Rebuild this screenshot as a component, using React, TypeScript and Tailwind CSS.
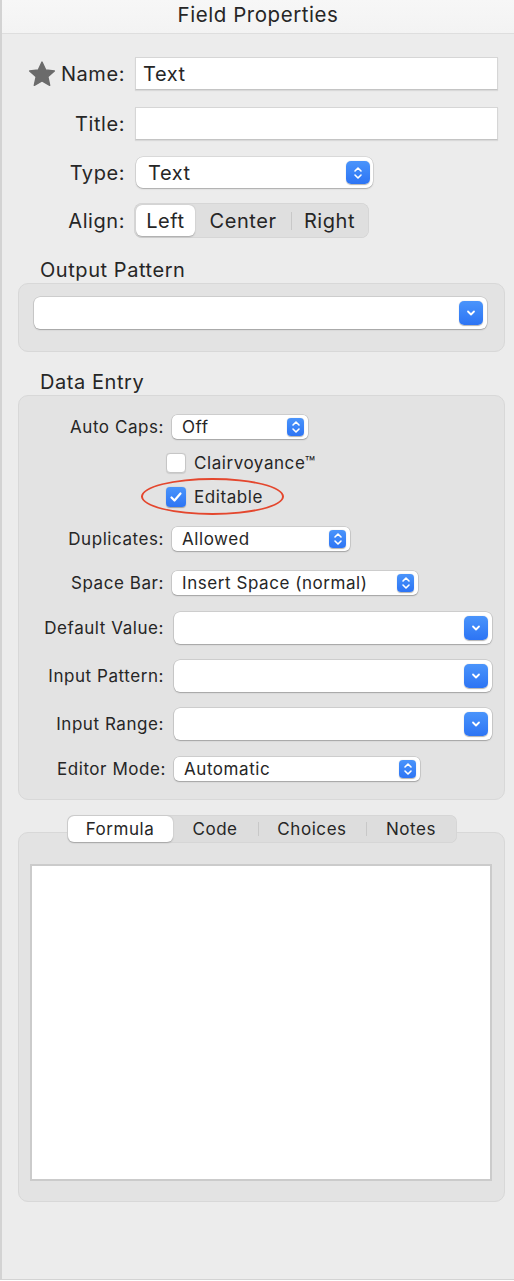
import React from "react";

const FONT = "font-['Inter','Noto_Sans',sans-serif] tracking-[0.035em]";

function UpDown({ w, h, r }: { w: number; h: number; r: string }) {
  return (
    <span
      className={`flex items-center justify-center bg-gradient-to-b from-[#4a94fb] to-[#2d74f4] shadow-[0_0.5px_1px_rgba(0,0,0,0.3)] ${r}`}
      style={{ width: w, height: h }}
    >
      <svg width="10" height="14" viewBox="0 0 10 14" fill="none">
        <path d="M2 5 L5 2 L8 5" stroke="white" strokeWidth="1.6" strokeLinecap="round" strokeLinejoin="round" />
        <path d="M2 9 L5 12 L8 9" stroke="white" strokeWidth="1.6" strokeLinecap="round" strokeLinejoin="round" />
      </svg>
    </span>
  );
}

function Down() {
  return (
    <span className="flex h-[24px] w-[24px] items-center justify-center rounded-[5px] bg-gradient-to-b from-[#4a94fb] to-[#2d74f4] shadow-[0_0.5px_1px_rgba(0,0,0,0.3)]">
      <svg width="12" height="8" viewBox="0 0 12 8" fill="none">
        <path d="M3 2.5 L6 5.5 L9 2.5" stroke="white" strokeWidth="1.8" strokeLinecap="round" strokeLinejoin="round" />
      </svg>
    </span>
  );
}

function SmallSelect({ value, w, ml = 0 }: { value: string; w: number; ml?: number }) {
  return (
    <div
      className="flex h-[24px] items-center justify-between rounded-[5px] bg-white pl-[10px] pr-[4px] text-[17px] shadow-[0_0_0_0.5px_rgba(0,0,0,0.18),0_1px_1.5px_rgba(0,0,0,0.22)]"
      style={{ width: w, marginLeft: ml }}
    >
      <span className="pt-[2px]">{value}</span>
      <UpDown w={17} h={18} r="rounded-[4px]" />
    </div>
  );
}

function Combo({ w }: { w: number }) {
  return (
    <div
      className="flex h-[32px] items-center justify-end rounded-[6px] bg-white pr-[4px] shadow-[0_0_0_0.5px_rgba(0,0,0,0.18),0_1px_1.5px_rgba(0,0,0,0.22)]"
      style={{ width: w }}
    >
      <Down />
    </div>
  );
}

function Check({ on }: { on?: boolean }) {
  return on ? (
    <span className="flex h-[20px] w-[20px] items-center justify-center rounded-[4px] bg-gradient-to-b from-[#4a94fb] to-[#2d74f4] shadow-[0_0.5px_1px_rgba(0,0,0,0.3)]">
      <svg width="14" height="12" viewBox="0 0 14 12" fill="none">
        <path d="M2.5 6.5 L5.5 9.5 L11.5 2.5" stroke="white" strokeWidth="2.2" strokeLinecap="round" strokeLinejoin="round" />
      </svg>
    </span>
  ) : (
    <span className="h-[20px] w-[20px] rounded-[4px] border border-[#c6c6c6] bg-white shadow-[0_0.5px_1px_rgba(0,0,0,0.1)]" />
  );
}

function Heading({ children }: { children: React.ReactNode }) {
  return <div className="ml-[38px] h-[24px] pt-[1px] text-[20px] leading-[24px]">{children}</div>;
}

export default function App() {
  return (
    <div className={`${FONT} h-[1281px] w-[514px] overflow-hidden bg-white text-[#262626]`}>
      <div className="flex h-[1280px] flex-col border-b border-l-2 border-[#d3d3d3] bg-[#ececec]">
        {/* title bar */}
        <div className="flex h-[34px] shrink-0 items-center justify-center border-b border-[#dedede] bg-gradient-to-b from-[#f7f7f7] to-[#f3f3f3] pb-[3px] text-[20.5px]">
          Field Properties
        </div>

        {/* top form */}
        <div className="mt-[23px] flex flex-col text-[20px]">
          <div className="flex h-[33px] items-center">
            <div className="flex w-[123px] items-center justify-end gap-[5px] pt-[1px]">
              <svg width="28" height="27" viewBox="0 0 24 23">
                <path
                  d="M12 0.8 L15.2 7.6 L22.6 8.4 L17 13.4 L18.6 20.8 L12 17 L5.4 20.8 L7 13.4 L1.4 8.4 L8.8 7.6 Z"
                  fill="#6b6b6b"
                  strokeLinejoin="round"
                  stroke="#6b6b6b"
                  strokeWidth="1.2"
                />
              </svg>
              <span>Name:</span>
            </div>
            <div className="ml-[10px] flex h-[33px] w-[363px] items-center border border-[#d6d6d6] border-b-[#c4c4c4] bg-white pl-[7px] pt-[1px] shadow-[0_1px_1px_rgba(0,0,0,0.08)]">
              Text
            </div>
          </div>

          <div className="mt-[17px] flex h-[33px] items-center">
            <div className="w-[123px] pt-[1px] text-right">Title:</div>
            <div className="ml-[10px] h-[33px] w-[363px] border border-[#d6d6d6] border-b-[#c4c4c4] bg-white shadow-[0_1px_1px_rgba(0,0,0,0.08)]" />
          </div>

          <div className="mt-[17px] flex h-[31px] items-center">
            <div className="w-[123px] pt-[1px] text-right">Type:</div>
            <div className="ml-[11px] flex h-[31px] w-[237px] items-center justify-between rounded-[7px] bg-white pl-[12px] pr-[3px] shadow-[0_0_0_0.5px_rgba(0,0,0,0.15),0_1px_1.5px_rgba(0,0,0,0.22)]">
              <span className="pt-[1px]">Text</span>
              <UpDown w={24} h={23} r="rounded-[5px]" />
            </div>
          </div>

          <div className="mt-[15px] flex h-[35px] items-center">
            <div className="w-[123px] pt-[1px] text-right">Align:</div>
            <div className="ml-[9px] flex h-[35px] items-center rounded-[8px] bg-[#dfdfdf] p-[2px] shadow-[inset_0_0_0_0.5px_rgba(0,0,0,0.08)]">
              <div className="flex h-[31px] w-[59px] items-center justify-center rounded-[6px] bg-white pt-[1px] shadow-[0_0.5px_1.5px_rgba(0,0,0,0.25)]">
                Left
              </div>
              <div className="flex h-[31px] w-[96px] items-center justify-center pt-[1px]">Center</div>
              <div className="h-[18px] w-px bg-[#c8c8c8]" />
              <div className="flex h-[31px] w-[75px] items-center justify-center pt-[1px]">Right</div>
            </div>
          </div>
        </div>

        {/* output pattern */}
        <div className="mt-[19px]">
          <Heading>Output Pattern</Heading>
          <div className="mr-[9px] ml-[16px] mt-[2px] flex h-[69px] flex-col rounded-[10px] border border-[#d8d8d8] bg-[#e3e3e3] pl-[15px] pt-[13px]">
            <Combo w={453} />
          </div>
        </div>

        {/* data entry */}
        <div className="mt-[17px]">
          <Heading>Data Entry</Heading>
          <div className="mr-[9px] ml-[16px] mt-[2px] flex h-[405px] flex-col rounded-[10px] border border-[#d8d8d8] bg-[#e3e3e3] text-[17px]">
            <div className="mt-[19px] flex h-[24px] items-center">
              <div className="w-[145px] pt-[2px] text-right">Auto Caps:</div>
              <SmallSelect value="Off" w={136} ml={8} />
            </div>
            <div className="mt-[14px] flex h-[20px] items-center pl-[147px]">
              <Check />
              <span className="ml-[8px] pt-[2px]">Clairvoyance™</span>
            </div>
            <div className="relative mt-[14px] flex h-[20px] items-center pl-[147px]">
              <Check on />
              <span className="ml-[8px] pt-[2px]">Editable</span>
              <div className="absolute left-[122px] top-[-9px] h-[37px] w-[143px] rounded-[50%] border-2 border-[#e4472e]" />
            </div>
            <div className="mt-[20px] flex h-[24px] items-center">
              <div className="w-[145px] pt-[2px] text-right">Duplicates:</div>
              <SmallSelect value="Allowed" w={178} ml={8} />
            </div>
            <div className="mt-[20px] flex h-[24px] items-center">
              <div className="w-[145px] pt-[2px] text-right">Space Bar:</div>
              <SmallSelect value="Insert Space (normal)" w={246} ml={8} />
            </div>
            <div className="mt-[17px] flex h-[32px] items-center">
              <div className="w-[145px] pt-[2px] text-right">Default Value:</div>
              <div className="ml-[10px]">
                <Combo w={318} />
              </div>
            </div>
            <div className="mt-[16px] flex h-[32px] items-center">
              <div className="w-[145px] pt-[2px] text-right">Input Pattern:</div>
              <div className="ml-[10px]">
                <Combo w={318} />
              </div>
            </div>
            <div className="mt-[16px] flex h-[32px] items-center">
              <div className="w-[145px] pt-[2px] text-right">Input Range:</div>
              <div className="ml-[10px]">
                <Combo w={318} />
              </div>
            </div>
            <div className="mt-[17px] flex h-[24px] items-center">
              <div className="w-[147px] pt-[2px] text-right">Editor Mode:</div>
              <SmallSelect value="Automatic" w={246} ml={8} />
            </div>
          </div>
        </div>

        {/* tabs */}
        <div className="mr-[9px] ml-[16px] mt-[32px] flex h-[370px] flex-col items-center rounded-[10px] border border-[#d8d8d8] bg-[#e3e3e3] text-[17px]">
          <div className="-mt-[18px] flex h-[28px] w-[390px] items-center rounded-[7px] bg-[#dddddd] p-[1px] shadow-[inset_0_0_0_0.5px_rgba(0,0,0,0.06)]">
            <div className="flex h-[26px] w-[105px] items-center justify-center rounded-[6px] bg-white pt-[2px] shadow-[0_0.5px_1.5px_rgba(0,0,0,0.25)]">
              Formula
            </div>
            <div className="flex h-[26px] w-[85px] items-center justify-center pt-[2px]">Code</div>
            <div className="h-[14px] w-px bg-[#c8c8c8]" />
            <div className="flex h-[26px] w-[107px] items-center justify-center pt-[2px]">Choices</div>
            <div className="h-[14px] w-px bg-[#c8c8c8]" />
            <div className="flex h-[26px] w-[89px] items-center justify-center pt-[2px]">Notes</div>
          </div>
          <div className="mt-[21px] ml-[11px] h-[317px] w-[462px] self-start border-2 border-[#cbcbcb] bg-white" />
        </div>
      </div>
    </div>
  );
}
